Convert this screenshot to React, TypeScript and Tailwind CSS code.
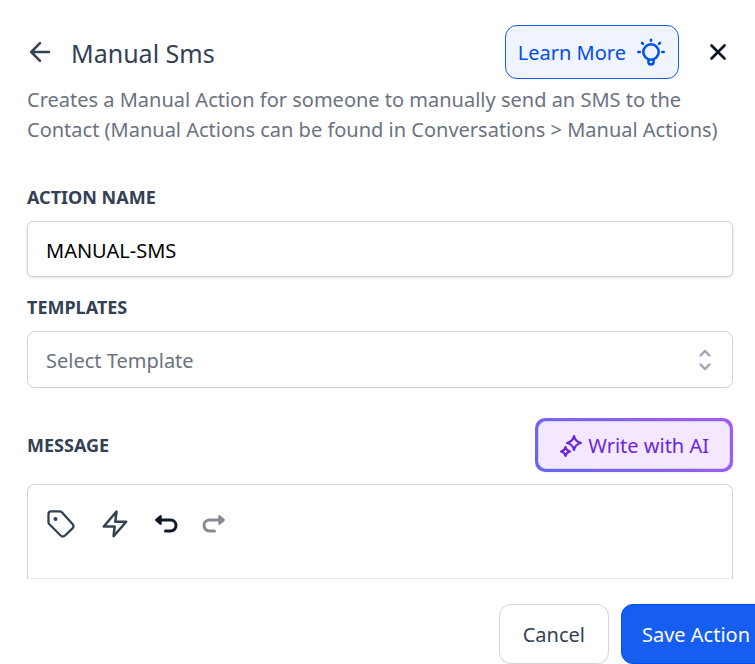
import { useState } from 'react';
import type { ReactNode } from 'react';

type IconProps = { className?: string; width: number; height: number; children: ReactNode };

function Icon({ className = '', width, height, children }: IconProps) {
  return (
    <svg
      width={width}
      height={height}
      viewBox={`0 0 ${width} ${height}`}
      fill="none"
      stroke="currentColor"
      strokeLinecap="round"
      strokeLinejoin="round"
      aria-hidden="true"
      className={`shrink-0 ${className}`}
    >
      {children}
    </svg>
  );
}

const BackIcon = () => (
  <Icon width={24} height={24}>
    <path d="M22 12H4.200M13 3.200 4.200 12l8.800 8.800" strokeWidth="2.500" />
  </Icon>
);

const CloseIcon = () => (
  <Icon width={24} height={24}>
    <path d="m5.500 5.500 13 13M18.500 5.500l-13 13" strokeWidth="2.700" />
  </Icon>
);

const BulbIcon = () => (
  <Icon width={28} height={28}>
    <circle cx="14" cy="14" r="7.700" strokeWidth="2.500" />
    <path d="M11.500 21.500v3a1.800 1.800 0 0 0 1.800 1.800h1.400a1.800 1.800 0 0 0 1.800-1.800v-3" strokeWidth="2.500" />
    <path d="M14 1.800v1M1.300 14h1.500M25.200 14h1.500M5 4.900l1 1M23 4.900l-1 1" strokeWidth="2.500" />
  </Icon>
);

const SparkleIcon = () => (
  <Icon width={24} height={24}>
    <path d="M15 2q1.200 5.800 7 7-5.800 1.200-7 7-1.200-5.800-7-7 5.800-1.200 7-7Z" strokeWidth="2.200" />
    <path d="M6.500 13q.8 3.700 4.500 4.500-3.700.8-4.500 4.500-.8-3.700-4.500-4.500 3.700-.8 4.500-4.500Z" strokeWidth="2.200" />
  </Icon>
);

const TagIcon = () => (
  <Icon width={30} height={30}>
    <path
      d="M2.500 5v8.200q0 1.200.9 2.100l11.200 11.200q2.200 2 4.400 0l7.500-7.200q2-2.200 0-4.400L15.900 3.300q-1-1-2.400-1H5q-2.500 0-2.500 2.700Z"
      strokeWidth="2.300"
    />
    <circle cx="9.500" cy="10" r="2" fill="currentColor" stroke="none" />
  </Icon>
);

const BoltIcon = () => (
  <Icon width={26} height={30}>
    <path d="M14.500 2.500 1.800 17.500h10.800l-1 9.700L24.200 12.800H13.300l1.200-10.300Z" strokeWidth="2.500" />
  </Icon>
);

const UndoIcon = ({ className }: { className?: string }) => (
  <Icon width={24} height={22} className={className}>
    <path d="M3 7h13.500a5.500 5.500 0 0 1 0 11H11.500" strokeWidth="3" />
    <path d="M6.500 3.300 2.500 7l4 3.700Z" fill="currentColor" strokeWidth="2.500" />
  </Icon>
);

const ChevronsIcon = () => (
  <Icon width={14} height={22} className="pointer-events-none col-start-1 row-start-1 mr-[21px] justify-self-end text-[#98a2b3]">
    <path d="m2.500 6.500 4.500-4.500 4.500 4.500M2.500 15.500 7 20l4.500-4.500" strokeWidth="2.300" />
  </Icon>
);

const labelClass = 'block text-lg leading-6 font-bold text-[#344054] uppercase';

export default function App() {
  const [name, setName] = useState('MANUAL-SMS');
  const [template, setTemplate] = useState('');

  return (
    <main className="overflow-hidden bg-white pt-[25px] font-['Noto_Sans','Open_Sans',sans-serif] text-xl text-[#344054]">
      <header className="pr-[22px] pl-[27px]">
        <div className="flex items-center pr-[3px]">
          <button type="button" aria-label="Back">
            <BackIcon />
          </button>
          <h1 className="ml-5 pt-0.5 text-[25px] leading-8">Manual Sms</h1>
          <button
            type="button"
            className="ml-auto flex h-[54px] items-center gap-[11px] rounded-xl border border-[#155eef] bg-[#eff4ff] pr-[13px] pl-3 text-[#004eeb] shadow-xs"
          >
            <span className="pt-0.5">Learn More</span>
            <BulbIcon />
          </button>
          <button type="button" aria-label="Close" className="ml-[27px] text-[#101828]">
            <CloseIcon />
          </button>
        </div>
        <p className="mt-[6px] leading-[30px] text-[#6b7280]">
          Creates a Manual Action for someone to manually send an SMS to the Contact (Manual Actions can be found in
          Conversations &gt; Manual Actions)
        </p>
      </header>

      <form onSubmit={(e) => e.preventDefault()}>
        <div className="mt-10 pr-[22px] pl-[27px]">
          <label htmlFor="action-name" className={labelClass}>
            Action name
          </label>
          <input
            id="action-name"
            value={name}
            onChange={(e) => setName(e.target.value)}
            className="mt-3 h-14 w-full rounded-md border border-[#d0d5dd] bg-white px-[18px] pt-0.5 text-black shadow-sm"
          />

          <label htmlFor="template" className={`mt-[18px] ${labelClass}`}>
            Templates
          </label>
          <div className="mt-3 grid items-center">
            <select
              id="template"
              value={template}
              onChange={(e) => setTemplate(e.target.value)}
              className="col-start-1 row-start-1 h-[57px] w-full appearance-none rounded-lg border border-[#d0d5dd] bg-white px-[18px] pt-0.5 text-[#6b7280] shadow-xs"
            >
              <option value="">Select Template</option>
            </select>
            <ChevronsIcon />
          </div>

          <div className="mt-[30px] flex items-center justify-between">
            <label htmlFor="message" className={labelClass}>
              Message
            </label>
            <button
              type="button"
              className="h-[54px] rounded-[10px] bg-linear-45 from-[#6366f1] to-[#a855f7] p-[3px] text-[#6927da] shadow-xs"
            >
              <span className="flex h-full items-center gap-[5px] rounded-lg border border-[#d0d5dd] bg-[#f3e8ff] px-5 pt-0.5">
                <SparkleIcon />
                Write with AI
              </span>
            </button>
          </div>

          <div className="mt-3 h-[95px] overflow-hidden rounded-t-lg border border-b-0 border-[#d0d5dd]">
            <div className="flex h-[94px] items-start border-b border-[#e4e7ec] pt-6 pl-[18px]">
              <button type="button" aria-label="Insert tag">
                <TagIcon />
              </button>
              <button type="button" aria-label="Trigger links" className="ml-[26px]">
                <BoltIcon />
              </button>
              <button type="button" aria-label="Undo" className="mt-1 ml-[26px] text-[#101828]">
                <UndoIcon />
              </button>
              <button type="button" aria-label="Redo" disabled className="mt-1 ml-6 text-[#878b91]">
                <UndoIcon className="-scale-x-100" />
              </button>
            </div>
            <textarea id="message" className="block w-full resize-none p-4" />
          </div>
        </div>

        {/* Save button runs past the right edge of the panel */}
        <footer className="-mr-4 mt-[25px] flex justify-end gap-3">
          <button type="button" className="h-[60px] rounded-xl border border-[#d0d5dd] bg-white px-[23px] pt-0.5 shadow-xs">
            Cancel
          </button>
          <button
            type="submit"
            className="h-[60px] rounded-xl border border-[#004eeb] bg-[#155eef] px-5 pt-0.5 text-white shadow-xs"
          >
            Save Action
          </button>
        </footer>
      </form>
    </main>
  );
}
